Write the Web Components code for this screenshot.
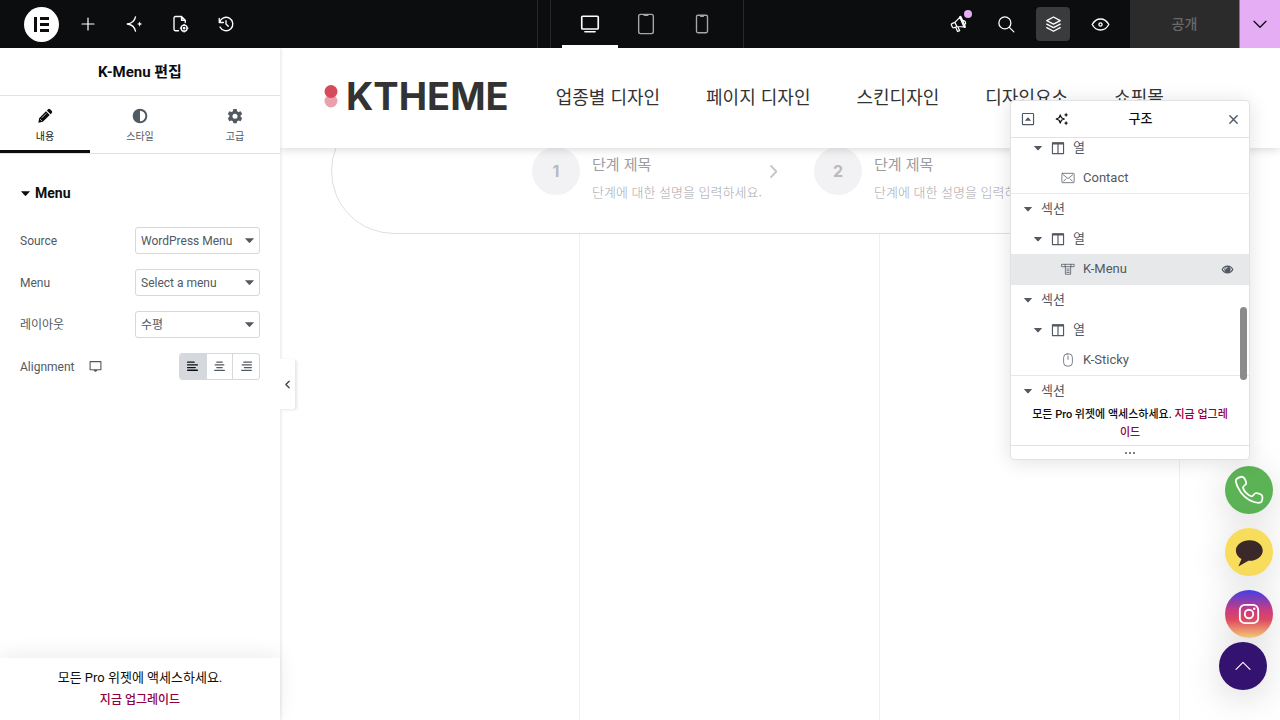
<!DOCTYPE html>
<html lang="ko">
<head>
  <meta charset="UTF-8">
  <meta name="viewport" content="width=device-width, initial-scale=1">
  <title>K-Menu 편집</title>
  <style>
    * {
      box-sizing: border-box;
    }

    body {
      margin: 0;
      height: 100vh;
      overflow: hidden;
      background: #fff;
      font-family: Roboto, 'Noto Sans CJK KR', sans-serif;
      font-size: 12px;
      color: #515962;
    }
  </style>
</head>
<body>
  <editor-app>
    <top-bar slot="bar"></top-bar>
    <editor-panel slot="panel">
      <control-row label="Source"><select-box slot="control" label="Source" value="WordPress Menu"></select-box></control-row>
      <control-row label="Menu"><select-box slot="control" label="Menu" value="Select a menu"></select-box></control-row>
      <control-row label="레이아웃"><select-box slot="control" label="레이아웃" value="수평"></select-box></control-row>
      <control-row label="Alignment" device><align-choice slot="control"></align-choice></control-row>
    </editor-panel>
    <site-preview></site-preview>
    <structure-panel slot="overlay">
      <tree-row level="1" icon="column">열</tree-row>
      <tree-row level="2" icon="mail">Contact</tree-row>
      <tree-row level="0">섹션</tree-row>
      <tree-row level="1" icon="column">열</tree-row>
      <tree-row level="2" icon="nav" selected>K-Menu</tree-row>
      <tree-row level="0">섹션</tree-row>
      <tree-row level="1" icon="column">열</tree-row>
      <tree-row level="2" icon="mouse">K-Sticky</tree-row>
      <tree-row level="0">섹션</tree-row>
    </structure-panel>
  </editor-app>

  <script>
    const RESET = `
      * { box-sizing: border-box; }
      button { font: inherit; color: inherit; background: none; border: 0; padding: 0; margin: 0; cursor: pointer; }
      a { text-decoration: none; }
    `;

    class BaseElement extends HTMLElement {
      connectedCallback() {
        if (this.shadowRoot) return;
        const template = document.createElement('template');
        template.innerHTML = `<style>${RESET}</style>${this.render()}`;
        this.attachShadow({ mode: 'open' });
        this.shadowRoot.appendChild(template.content.cloneNode(true));
      }
    }

    const line = (body, width = 1.5) =>
      `<g fill="none" stroke="currentColor" stroke-width="${width}" stroke-linecap="round" stroke-linejoin="round">${body}</g>`;

    // every icon is drawn on a 24x24 grid
    const ICONS = {
      plus: line('<path d="M12 3v18M3 12h18"/>', 1.8),
      spark: line('<path d="M14 2.500C12.800 8 9 11.300 3 12c6 .7 9.800 4 11 9.500"/>', 1.8) +
        '<path fill="currentColor" d="M19.500 8.500l1 2.500 2.500 1-2.500 1-1 2.500-1-2.500-2.500-1 2.500-1z"/>',
      page: line('<path d="M10 21H6a2 2 0 0 1-2-2V4a2 2 0 0 1 2-2h8l5 5v3M14 2v5h5"/><circle cx="17.500" cy="17.500" r="4"/><circle cx="17.500" cy="17.500" r="1"/><path d="M17.500 12.500v1M17.500 21.500v1M12.500 17.500h1M21.500 17.500h1"/>', 1.8),
      history: line('<path d="M12 7.500V12l3 3M3.300 10a9 9 0 1 1 .7 6M3 4.500V10h5.500"/>', 1.8),
      desktop: line('<rect x="3" y="3.500" width="18" height="14" rx="1"/><path d="M6.500 20.500h11"/>', 1.8),
      tablet: line('<rect x="4" y="1.500" width="16" height="21" rx="2"/><path d="M10 2.500h4"/>'),
      mobile: line('<rect x="6" y="2.500" width="12" height="19" rx="1.500"/><path d="M10.500 3.500h3"/>'),
      horn: line('<path d="M3.500 11.500L7 10l6-6 5 11.500-8.500-.5-3.500 1.500a1.500 1.500 0 0 1-2-.8l-1.200-2.700a1.200 1.200 0 0 1 .7-1.500zM17 8c2.500-.5 4 3 2 4.500M8 16l2.300 5 2.500-1-2-4.500M7 10l2.500 5M13 4c-.3-1.500 1-1.500 1.500-.5l5 11.500c.4 1-.8 1.700-1.500.5"/>'),
      search: line('<circle cx="10.500" cy="10.500" r="8"/><path d="M16.500 16.500l6 6"/>', 1.7),
      layers: line('<path d="M12 2.500l8.500 4.500-8.500 4.500L3.500 7zM3.500 11.500L12 16l8.500-4.500M3.500 16L12 20.500l8.500-4.500"/>', 1.7),
      eye: line('<path d="M1.500 12C4 7.500 7.500 5 12 5s8 2.500 10.500 7c-2.500 4.500-6 7-10.500 7S4 16.500 1.500 12z"/><circle cx="12" cy="12" r="2"/>', 1.7),
      down: line('<path d="M3 8l9 9 9-9"/>', 2),
      up: line('<path d="M1.500 17L12 6.500 22.500 17"/>', 1.6),
      left: line('<path d="M15 6l-6 6 6 6"/>', 2.5),
      right: line('<path d="M8 3l8.500 9L8 21"/>', 3),
      pencil: '<path fill="currentColor" d="M2 22l1.200-6.800L13.500 5l5.600 5.500L8.800 20.800zM14.800 3.700l1.600-1.500a2.500 2.500 0 0 1 3.600 0l2 2a2.500 2.500 0 0 1 0 3.600l-1.600 1.500z"/><path d="M4.500 16.500l3 3M7 15l7-7" stroke="#fff" fill="none"/>',
      contrast: '<path fill="currentColor" fill-rule="evenodd" d="M12 1a11 11 0 1 0 0 22 11 11 0 0 0 0-22zm0 3v16a8 8 0 0 0 0-16z"/>',
      gear: '<path fill="currentColor" fill-rule="evenodd" d="M9.500 1.500h5l.7 3.200 2 1.200 3.200-1 2.400 4.200-2.400 2.200v2l2.400 2.200-2.400 4.300-3.200-1-2 1.100-.7 3.100h-5l-.7-3.100-2-1.100-3.200 1-2.400-4.300 2.400-2.200v-2L1.200 9.100l2.400-4.200 3.200 1 2-1.200zM12 8.500a3.800 3.800 0 1 0 0 7.600 3.800 3.800 0 0 0 0-7.600z"/>',
      caret: '<path fill="currentColor" d="M2 7h20l-8.500 9.500a2 2 0 0 1-3 0z"/>',
      screen: line('<path d="M2 3h20v15H2zM9 18.500h6L12 21z"/>', 2),
      alignleft: line('<path d="M3 4h12M3 9h18M3 14h14M3 19h18"/>', 2.5),
      aligncenter: line('<path d="M7 4h10M4 9h16M7 14h10M3 19h18"/>', 2.2),
      alignright: line('<path d="M7 4h14M4 9h17M8 14h13M3 19h18"/>', 2.2),
      collapse: line('<rect x="2.500" y="2.500" width="19" height="19" rx="1"/>', 2) + '<path fill="currentColor" d="M6.500 15h11L12 9z"/>',
      ai: line('<path d="M9 5l2 5 5 2-5 2-2 5-2-5-5-2 5-2z"/>', 2) +
        '<path fill="currentColor" d="M19 1l1.200 2.800L23 5l-2.800 1.200L19 9l-1.200-2.800L15 5l2.800-1.200zM19 15l1.200 2.800L23 19l-2.800 1.200L19 23l-1.200-2.800L15 19l2.800-1.200z"/>',
      close: line('<path d="M4 4l16 16M20 4L4 20"/>', 3),
      column: line('<path d="M2.500 3.500h19v18h-19zM12 4v17"/>', 2) + '<path fill="currentColor" d="M2 2h20v4H2z"/>',
      mail: line('<rect x="1.500" y="4" width="21" height="16" rx="1"/><path d="M4 6.500l8 6.500 8-6.500M4.500 17.500l4-4M19.500 17.500l-4-4"/>', 1.3),
      nav: line('<path d="M1.500 4h21v4h-21zM7 4v4M17 4v4M7.500 8v13h9V8M10 12h4M10 15h4M10 18h4"/>', 1.3),
      mouse: line('<rect x="4.500" y="1.500" width="15" height="21" rx="6"/><path d="M12 5v6"/>', 1.3),
      view: '<path fill="currentColor" fill-rule="evenodd" d="M1 12C3.500 7 7 4.500 12 4.500S20.500 7 23 12c-2.500 5-6 7.500-11 7.500S3.500 17 1 12zm2.500 0c1.300 2.300 3 4 5 5a6.500 6.500 0 0 1 0-10c-2 1-3.700 2.700-5 5zm17 0c-1.300-2.300-3-4-5-5a6.500 6.500 0 0 1 0 10c2-1 3.700-2.700 5-5zM12 7.500A4.500 4.500 0 0 0 7.500 12H9a3 3 0 0 1 3-3z"/>',
      phone: line('<path d="M2 3.200C4 1.500 6.500 1.200 7.500 1.800c1 .8 2.500 3.800 2.200 5.200-.3 1.300-2.700 1.500-2.500 3.200.4 2.300 4.100 6.300 6.600 6.800 1.700.3 2-2 3.400-2.400 1.600-.4 4.800.8 5.300 2 .5 1.300.2 4.200-.7 5-2.300 1.700-8.800-.2-13.300-4.300C4 13.200.3 5.200 2 3.200z"/>', 1.4),
      talk: '<path fill="#3b2929" d="M12.500 2.500C6.500 2.500 1.500 6 1.500 10.700c0 3 1.800 5.400 4.500 6.900L3.500 23.500l8-4.500h1c6 0 10.500-3.700 10.500-8.300S18.500 2.500 12.500 2.500z"/>',
      insta: line('<rect x="2" y="2" width="20" height="20" rx="5.500"/><circle cx="12" cy="12" r="4.600"/>', 2) + '<circle cx="17.700" cy="6.300" r="1.300" fill="currentColor"/>'
    };

    class UiIcon extends BaseElement {
      render() {
        const size = this.getAttribute('size') || 16;
        return `
          <style>
            :host { display: block; flex: none; }
            svg { display: block; }
          </style>
          <svg width="${size}" height="${size}" viewBox="0 0 24 24" aria-hidden="true">${ICONS[this.getAttribute('name')]}</svg>
        `;
      }
    }

    class EditorApp extends BaseElement {
      render() {
        return `
          <style>
            :host {
              display: grid;
              grid-template: auto minmax(0, 1fr) / 280px minmax(0, 1fr);
              height: 100%;
              position: relative;
            }
            .bar { grid-column: 1 / -1; }
            .bar, .panel, .main { display: grid; min-height: 0; }
            .panel { z-index: 2; }
          </style>
          <div class="bar"><slot name="bar"></slot></div>
          <div class="panel"><slot name="panel"></slot></div>
          <main class="main"><slot></slot></main>
          <slot name="overlay"></slot>
        `;
      }
    }

    class TopBar extends BaseElement {
      render() {
        return `
          <style>
            :host {
              display: grid;
              grid-template-columns: 1fr auto 1fr;
              height: 48px;
              background: #0c0d0e;
              color: #fff;
            }
            .group { display: flex; align-items: center; }
            .left { gap: 12px; padding-left: 24px; }
            .right { justify-content: flex-end; gap: 13px; }
            .tool { display: grid; place-items: center; width: 34px; height: 34px; border-radius: 4px; position: relative; }
            .tool.on { background: #3a3b3d; }
            .logo { background: #fff; border-radius: 50%; color: #0c0d0e; width: 35px; height: 35px; }
            .dot { position: absolute; top: 3px; right: 4px; width: 8px; height: 8px; border-radius: 50%; background: #e5adf4; }
            .middle { padding-left: 12px; border: solid #26282b; border-width: 0 1px; }
            .devices { display: flex; height: 48px; padding: 0 13px 0 11px; border-left: 1px solid #26282b; }
            .device { display: grid; place-items: center; width: 56px; border-bottom: 3px solid transparent; border-top: 3px solid transparent; color: #a4a7ab; }
            .device.on { border-bottom-color: #fff; color: #fff; }
            .publish { display: flex; align-self: stretch; }
            .publish .save { width: 109px; padding-bottom: 2px; background: #2b2b2b; color: #69696a; font-size: 14px; font-weight: 500; }
            .publish .more { display: grid; place-items: center; width: 41px; background: #e5adf4; color: #0c0d0e; border-left: 1px solid #8a6b92; }
          </style>
          <div class="group left">
            <button class="tool logo" aria-label="Elementor">
              <svg width="15" height="15" viewBox="0 0 15 15" fill="currentColor"><path d="M0 0h3v15H0zM6 0h9v3H6zM6 6h9v3H6zM6 12h9v3H6z"/></svg>
            </button>
            <button class="tool" aria-label="추가"><ui-icon name="plus"></ui-icon></button>
            <button class="tool" aria-label="AI"><ui-icon name="spark" size="18"></ui-icon></button>
            <button class="tool" aria-label="페이지 설정"><ui-icon name="page" size="18"></ui-icon></button>
            <button class="tool" aria-label="히스토리"><ui-icon name="history" size="18"></ui-icon></button>
          </div>
          <div class="middle">
            <div class="devices">
              <button class="device on" aria-label="데스크톱"><ui-icon name="desktop" size="22"></ui-icon></button>
              <button class="device" aria-label="태블릿"><ui-icon name="tablet" size="22"></ui-icon></button>
              <button class="device" aria-label="모바일"><ui-icon name="mobile" size="22"></ui-icon></button>
            </div>
          </div>
          <div class="group right">
            <button class="tool" aria-label="새 소식"><ui-icon name="horn" size="20"></ui-icon><span class="dot"></span></button>
            <button class="tool" aria-label="검색"><ui-icon name="search" size="18"></ui-icon></button>
            <button class="tool on" aria-label="구조"><ui-icon name="layers" size="19"></ui-icon></button>
            <button class="tool" aria-label="미리보기"><ui-icon name="eye" size="19"></ui-icon></button>
            <div class="publish">
              <button class="save">공개</button>
              <button class="more" aria-label="저장 옵션"><ui-icon name="down"></ui-icon></button>
            </div>
          </div>
        `;
      }
    }

    class EditorPanel extends BaseElement {
      render() {
        return `
          <style>
            :host {
              display: flex;
              flex-direction: column;
              position: relative;
              background: #fff;
              box-shadow: 1px 0 3px #0000001a;
            }
            h1 { margin: 0; height: 48px; line-height: 48px; font-size: 15px; font-weight: 700; text-align: center; color: #0c0d0e; border-bottom: 1px solid #e0e2e4; }
            .tabs { display: flex; gap: 5px; height: 58px; border-bottom: 1px solid #e0e2e4; }
            .tab { flex: 1; display: flex; flex-direction: column; align-items: center; padding-top: 12px; gap: 5px; font-size: 10px; line-height: 16px; }
            .tab.on { color: #0c0d0e; border-bottom: 3px solid #0c0d0e; }
            .controls { flex: 1; min-height: 0; padding: 26px 20px 0; }
            .section { display: flex; align-items: center; gap: 4px; height: 26px; margin-bottom: 21px; font-size: 14px; font-weight: 700; color: #0c0d0e; }
            footer { padding: 8px 0; text-align: center; line-height: 23px; color: #0c0d0e; box-shadow: 0 -4px 20px #00000012; }
            footer p { margin: 0; font-size: 13px; }
            footer a { display: block; font-size: 12px; font-weight: 500; color: #93003f; }
            .handle { position: absolute; left: 100%; top: 311px; width: 15px; height: 50px; display: grid; place-items: center; background: #fff; border-radius: 0 2px 2px 0; box-shadow: 2px 1px 3px #0000001a; color: #3f444b; }
          </style>
          <h1>K-Menu 편집</h1>
          <div class="tabs">
            <button class="tab on"><ui-icon name="pencil"></ui-icon>내용</button>
            <button class="tab"><ui-icon name="contrast"></ui-icon>스타일</button>
            <button class="tab"><ui-icon name="gear"></ui-icon>고급</button>
          </div>
          <div class="controls">
            <button class="section"><ui-icon name="caret" size="11"></ui-icon>Menu</button>
            <slot></slot>
          </div>
          <footer>
            <p>모든 Pro 위젯에 액세스하세요.</p>
            <a href="#">지금 업그레이드</a>
          </footer>
          <button class="handle" aria-label="패널 접기"><ui-icon name="left" size="13"></ui-icon></button>
        `;
      }
    }

    class ControlRow extends BaseElement {
      render() {
        return `
          <style>
            :host { display: flex; align-items: center; height: 27px; margin-bottom: 15px; line-height: 18px; }
            ui-icon { margin-left: 15px; }
            .control { margin-left: auto; }
          </style>
          <span>${this.getAttribute('label')}</span>
          ${this.hasAttribute('device') ? '<ui-icon name="screen" size="13"></ui-icon>' : ''}
          <div class="control"><slot name="control"></slot></div>
        `;
      }
    }

    class SelectBox extends BaseElement {
      render() {
        return `
          <style>
            :host { display: grid; width: 125px; align-items: center; }
            select, ui-icon { grid-area: 1 / 1; }
            select { appearance: none; width: 100%; height: 27px; padding: 0 5px; font: inherit; color: inherit; background: #fff; border: 1px solid #d5d8dc; border-radius: 3px; }
            ui-icon { justify-self: end; margin-right: 5px; pointer-events: none; }
          </style>
          <select aria-label="${this.getAttribute('label')}"><option>${this.getAttribute('value')}</option></select>
          <ui-icon name="caret" size="11"></ui-icon>
        `;
      }
    }

    class AlignChoice extends BaseElement {
      render() {
        return `
          <style>
            :host { display: flex; width: 81px; height: 27px; border: 1px solid #d5d8dc; border-radius: 3px; overflow: hidden; }
            button { flex: 1; display: grid; place-items: center; }
            button + button { border-left: 1px solid #d5d8dc; }
            .on { background: #d5d8dc; color: #0c0d0e; }
          </style>
          <button class="on" aria-label="왼쪽"><ui-icon name="alignleft" size="13"></ui-icon></button>
          <button aria-label="가운데"><ui-icon name="aligncenter" size="13"></ui-icon></button>
          <button aria-label="오른쪽"><ui-icon name="alignright" size="13"></ui-icon></button>
        `;
      }
    }

    class StepItem extends BaseElement {
      render() {
        return `
          <style>
            :host { display: flex; align-items: center; flex: none; font-family: 'Noto Sans CJK KR', sans-serif; }
            .number { display: grid; place-items: center; width: 48px; height: 48px; margin-right: 12px; border-radius: 50%; background: #f2f2f5; color: #b9b9bf; font: 700 16px Inter, sans-serif; }
            .text { width: 174px; white-space: nowrap; padding-top: 13px; }
            h3 { margin: 0; font-size: 15px; line-height: 28px; font-weight: 400; color: #9b9ba1; }
            p { margin: 0; font-size: 13px; line-height: 28px; font-weight: 300; color: #a8a8ae; }
            ui-icon { color: #c5c5ca; }
          </style>
          <span class="number">${this.getAttribute('number')}</span>
          <div class="text">
            <h3>단계 제목</h3>
            <p>단계에 대한 설명을 입력하세요.</p>
          </div>
          <ui-icon name="right" size="15"></ui-icon>
        `;
      }
    }

    class SitePreview extends BaseElement {
      render() {
        return `
          <style>
            :host { display: grid; position: relative; overflow: hidden; background: #fff; font-family: 'Noto Sans CJK KR', sans-serif; }
            header { position: absolute; inset: 0 0 auto; z-index: 1; display: flex; align-items: center; height: 100px; padding: 0 44px 4px; background: #fff; box-shadow: 0 0 10px #00000033; }
            .brand { display: flex; align-items: center; gap: 8px; margin-right: 47px; font: 700 38px/44px Inter, sans-serif; color: #333; }
            nav { display: flex; gap: 46px; white-space: nowrap; }
            nav a { font-size: 18px; line-height: 28px; color: #333; }
            .columns { grid-area: 1 / 1; display: grid; grid-template-columns: repeat(auto-fill, 300px); }
            .columns i { border-right: 1px solid #f0f0f2; }
            .steps { grid-area: 1 / 1; align-self: start; display: flex; align-items: center; gap: 33px; height: 126px; margin: 60px 51px 0; padding-left: 200px; overflow: hidden; background: #fff; border: 1px solid #dfdfe2; border-radius: 63px; }
            .chat { position: absolute; right: 0; bottom: 30px; display: flex; flex-direction: column; gap: 14px; padding-right: 7px; color: #fff; }
            .chat a { display: grid; place-items: center; width: 48px; height: 48px; border-radius: 50%; color: #fff; box-shadow: 0 8px 36px #00000026; }
            .call { background: #5cb356; }
            .kakao { background: #f8dc5c; }
            .insta { background: linear-gradient(#4140e5, #c93c80 42%, #df4961 62%, #f7cf79); }
            .chat .top { background: #34126f; margin: -10px 6px 0 -6px; }
          </style>
          <header>
            <div class="brand">
              <svg width="14" height="24" viewBox="0 0 14 24" aria-hidden="true"><circle cx="7" cy="17" r="6.500" fill="#eba0ad"/><circle cx="7" cy="7.500" r="6.500" fill="#d64a5b"/></svg>
              <span>KTHEME</span>
            </div>
            <nav>
              <a href="#">업종별 디자인</a>
              <a href="#">페이지 디자인</a>
              <a href="#">스킨디자인</a>
              <a href="#">디자인요소</a>
              <a href="#">쇼핑몰</a>
            </nav>
          </header>
          <div class="columns"><i></i><i></i><i></i></div>
          <section class="steps">
            <step-item number="1"></step-item>
            <step-item number="2"></step-item>
          </section>
          <div class="chat">
            <a class="call" href="#" aria-label="전화"><ui-icon name="phone" size="30"></ui-icon></a>
            <a class="kakao" href="#" aria-label="카카오톡"><ui-icon name="talk" size="30"></ui-icon></a>
            <a class="insta" href="#" aria-label="인스타그램"><ui-icon name="insta" size="22"></ui-icon></a>
            <a class="top" href="#" aria-label="맨 위로"><ui-icon name="up"></ui-icon></a>
          </div>
        `;
      }
    }

    class TreeRow extends BaseElement {
      render() {
        const level = Number(this.getAttribute('level'));
        const icon = this.getAttribute('icon');
        return `
          <style>
            :host { display: flex; flex: none; align-items: center; gap: 8px; height: 30px; padding: 0 15px 0 ${[12, 22, 50][level]}px; font-size: 13px; line-height: 20px; }
            :host([level="0"]) { height: 31px; border-top: 1px solid #e6e8ea; }
            :host([selected]) { background: #e6e8ea; }
            .view { margin-left: auto; }
          </style>
          ${level < 2 ? '<ui-icon name="caret" size="10"></ui-icon>' : ''}
          ${icon ? `<ui-icon name="${icon}" size="14"></ui-icon>` : ''}
          <slot></slot>
          ${this.hasAttribute('selected') ? '<ui-icon class="view" name="view" size="13"></ui-icon>' : ''}
        `;
      }
    }

    class StructurePanel extends BaseElement {
      render() {
        return `
          <style>
            :host {
              position: absolute;
              z-index: 3;
              top: 100px;
              right: 30px;
              display: flex;
              flex-direction: column;
              width: 240px;
              height: 360px;
              background: #fff;
              border: 1px solid #e0e2e4;
              border-radius: 4px;
              box-shadow: 0 2px 20px #0000001f;
              overflow: hidden;
            }
            header { display: flex; align-items: center; gap: 20px; height: 37px; flex: none; padding: 0 10px; border-bottom: 1px solid #e0e2e4; }
            .ai { color: #0c0d0e; }
            h2 { flex: 1; margin: 0; padding-right: 16px; text-align: center; font-size: 13px; line-height: 20px; font-weight: 500; color: #0c0d0e; }
            .tree { flex: 1; min-height: 0; display: flex; flex-direction: column; justify-content: flex-end; overflow: hidden; position: relative; }
            .thumb { position: absolute; right: 2px; top: 169px; width: 7px; height: 73px; border-radius: 4px; background: #8b8b8b; }
            p { margin: 0; padding: 0 18px 3px; text-align: center; word-break: keep-all; font-size: 11px; line-height: 18px; font-weight: 500; color: #0c0d0e; }
            p a { color: #93003f; }
            .grip { display: flex; align-items: center; justify-content: center; gap: 2px; height: 14px; flex: none; border-top: 1px solid #e0e2e4; }
            .grip i { width: 2px; height: 2px; border-radius: 50%; background: #515962; }
          </style>
          <header>
            <button aria-label="모두 접기"><ui-icon name="collapse" size="14"></ui-icon></button>
            <button class="ai" aria-label="AI"><ui-icon name="ai" size="14"></ui-icon></button>
            <h2>구조</h2>
            <button aria-label="닫기"><ui-icon name="close" size="11"></ui-icon></button>
          </header>
          <div class="tree"><slot></slot><span class="thumb"></span></div>
          <p>모든 Pro 위젯에 액세스하세요. <a href="#">지금 업그레<wbr>이드</a></p>
          <div class="grip"><i></i><i></i><i></i></div>
        `;
      }
    }

    customElements.define('ui-icon', UiIcon);
    customElements.define('editor-app', EditorApp);
    customElements.define('top-bar', TopBar);
    customElements.define('editor-panel', EditorPanel);
    customElements.define('control-row', ControlRow);
    customElements.define('select-box', SelectBox);
    customElements.define('align-choice', AlignChoice);
    customElements.define('step-item', StepItem);
    customElements.define('site-preview', SitePreview);
    customElements.define('tree-row', TreeRow);
    customElements.define('structure-panel', StructurePanel);
  </script>
</body>
</html>
